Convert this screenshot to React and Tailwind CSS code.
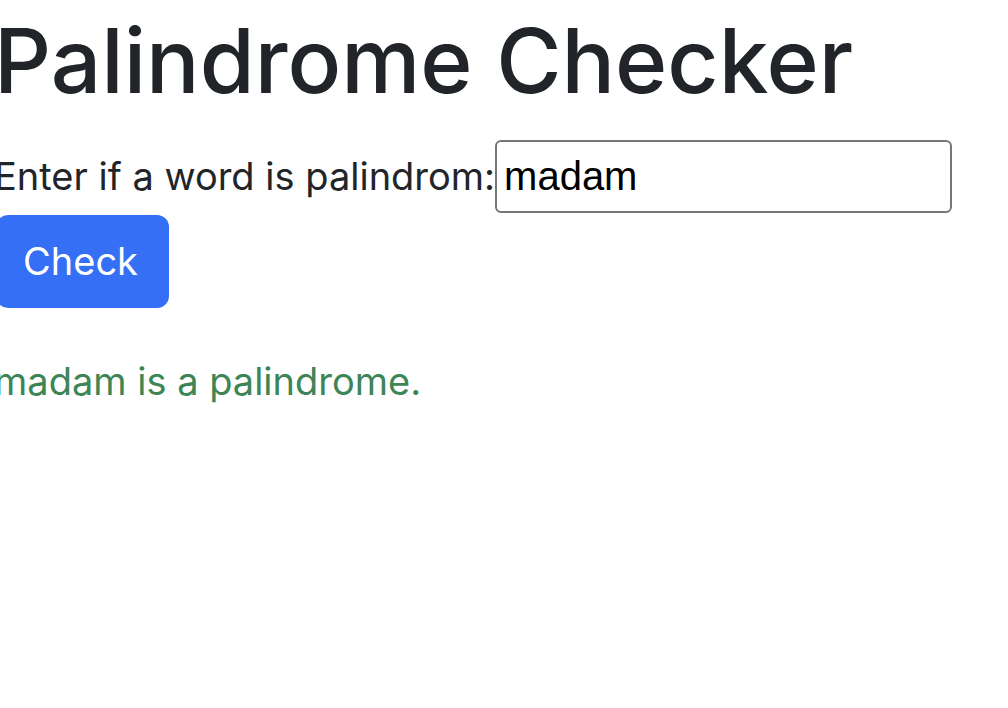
export default function App() {
  return (
    <div className="font-['Inter',sans-serif] text-[#212529] bg-white min-h-[708px] -ml-[6px]">
      <h1 className="text-[89px] leading-[1.2] font-medium pt-[8px]">Palindrome Checker</h1>
      <div className="mt-[25px] flex items-baseline text-[38px] leading-[1.5]">
        <label>Enter if a word is palindrom:</label>
        <input
          defaultValue="madam"
          className="font-['Liberation_Sans',Arial,sans-serif] text-black text-[40px] w-[457px] h-[73px] border-2 border-[#767676] rounded-[6px] pl-[7px] outline-none"
        />
      </div>
      <button className="mt-[2px] ml-[2px] bg-[#356ff5] text-white text-[38px] leading-[1.5] h-[93px] pl-[27px] pr-[31px] rounded-[12px]">
        Check
      </button>
      <p className="mt-[45px] text-[38px] leading-[1.5] text-[#3d8556]">madam is a palindrome.</p>
    </div>
  );
}
